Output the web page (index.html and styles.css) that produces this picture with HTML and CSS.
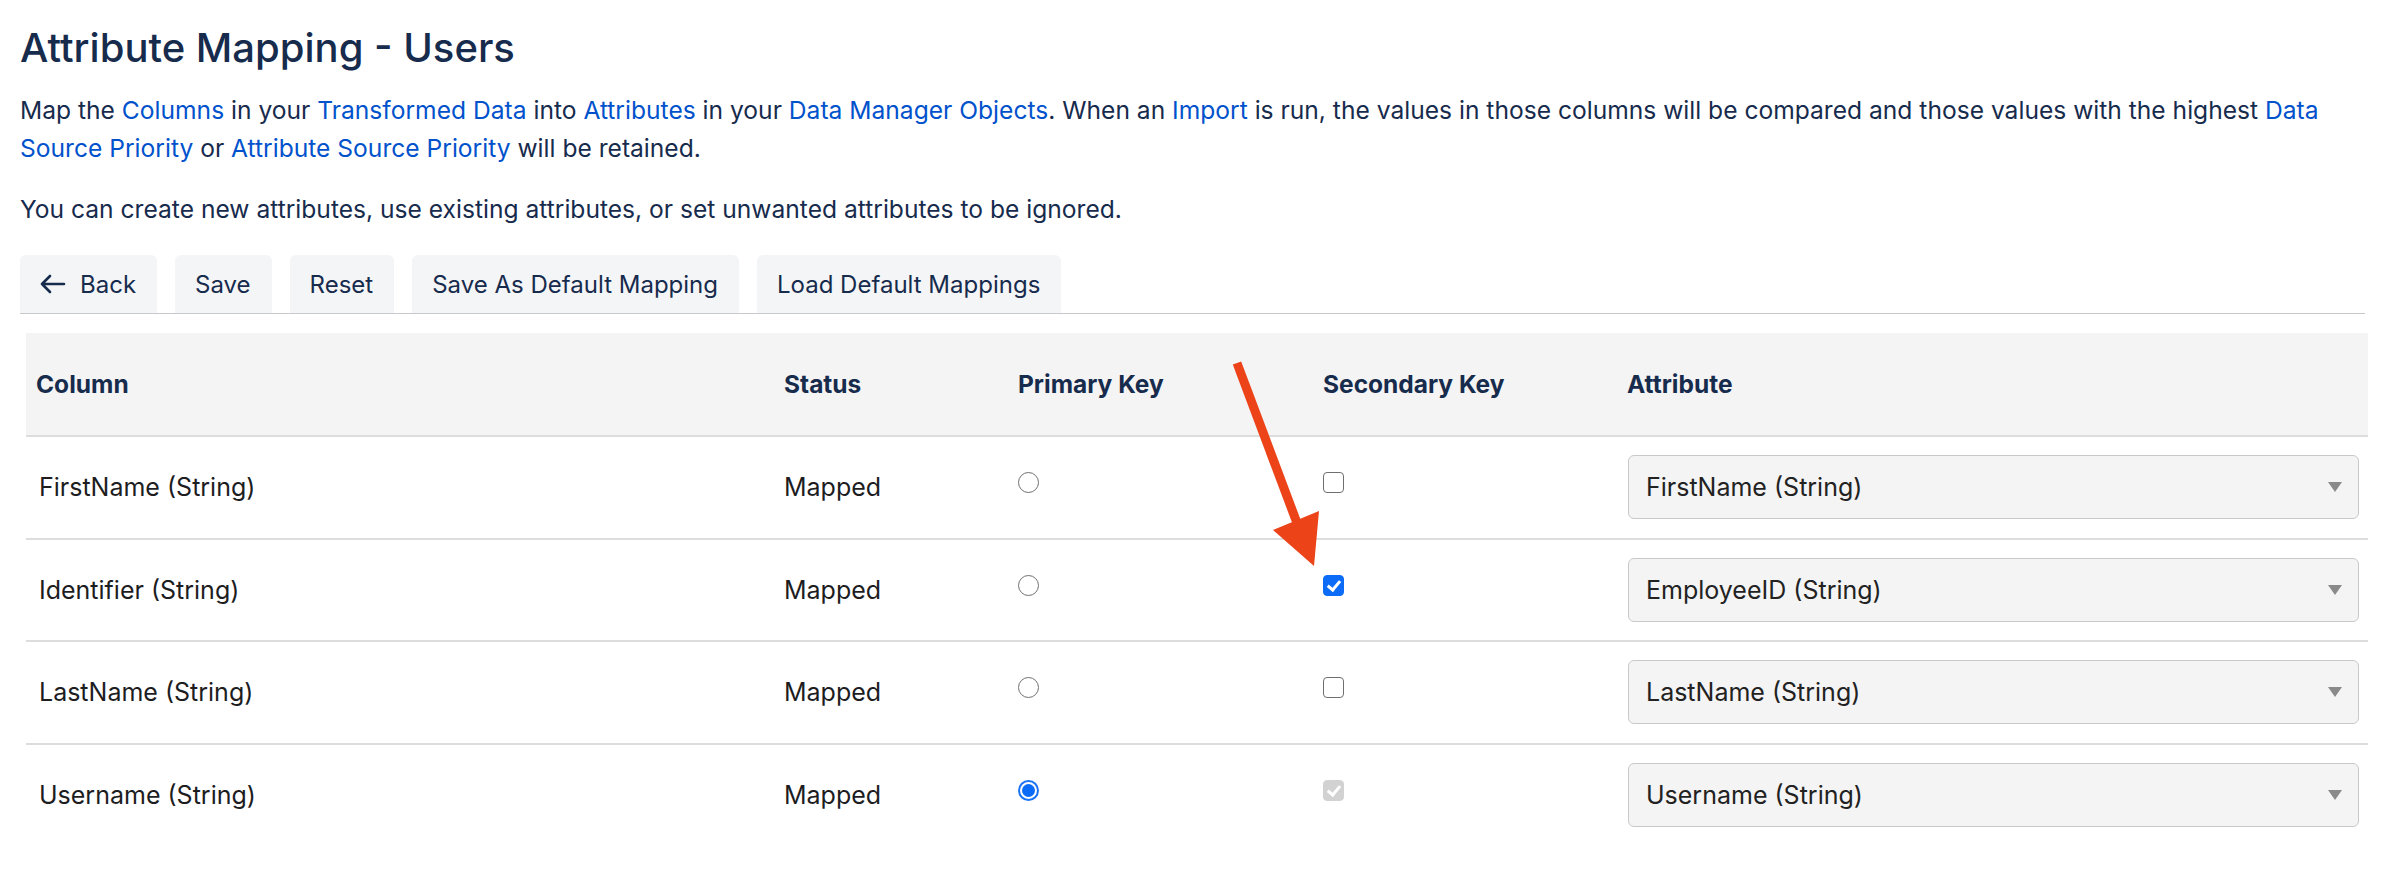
FILE: index.html
```html
<!DOCTYPE html>
<html>
  <head>
    <meta charset="utf-8" />
    <title>Attribute Mapping - Users</title>
    <link rel="stylesheet" href="styles.css">
  </head>
  <body>
    <div class="page">
      <h1 class="page-title">Attribute Mapping - Users</h1>
      <p class="intro">Map the <a href="#">Columns</a> in your <a href="#">Transformed Data</a> into <a href="#">Attributes</a> in your <a href="#">Data Manager Objects</a>. When an <a href="#">Import</a> is run, the values in those columns will be compared and those values with the highest <a href="#">Data</a> <a href="#">Source Priority</a> or <a href="#">Attribute Source Priority</a> will be retained.</p>
      <p class="intro intro-last">You can create new attributes, use existing attributes, or set unwanted attributes to be ignored.</p>

      <!-- Toolbar -->
      <div class="toolbar">
        <button class="tool-btn">
          <svg class="back-icon" width="26" height="20" viewBox="0 0 26 20" fill="none" stroke="#172b4d" stroke-width="2.6" stroke-linecap="round" stroke-linejoin="round">
            <path d="M24 10H2M10 2L2 10l8 8" />
          </svg>
          Back
        </button>
        <button class="tool-btn">Save</button>
        <button class="tool-btn">Reset</button>
        <button class="tool-btn">Save As Default Mapping</button>
        <button class="tool-btn">Load Default Mappings</button>
      </div>

      <!-- Mapping table -->
      <table class="mapping">
        <colgroup>
          <col class="col-column" />
          <col class="col-status" />
          <col class="col-primary" />
          <col class="col-secondary" />
          <col class="col-attribute" />
        </colgroup>
        <thead>
          <tr>
            <th>Column</th>
            <th>Status</th>
            <th>Primary Key</th>
            <th>Secondary Key</th>
            <th>Attribute</th>
          </tr>
        </thead>
        <tbody>
          <tr>
            <td class="name">FirstName (String)</td>
            <td>Mapped</td>
            <td><input type="radio" name="pk" /></td>
            <td><input type="checkbox" /></td>
            <td>
              <div class="select">FirstName (String)<span class="caret"></span></div>
            </td>
          </tr>
          <tr>
            <td class="name">Identifier (String)</td>
            <td>Mapped</td>
            <td><input type="radio" name="pk" /></td>
            <td><input type="checkbox" checked /></td>
            <td>
              <div class="select">EmployeeID (String)<span class="caret"></span></div>
            </td>
          </tr>
          <tr>
            <td class="name">LastName (String)</td>
            <td>Mapped</td>
            <td><input type="radio" name="pk" /></td>
            <td><input type="checkbox" /></td>
            <td>
              <div class="select">LastName (String)<span class="caret"></span></div>
            </td>
          </tr>
          <tr>
            <td class="name">Username (String)</td>
            <td>Mapped</td>
            <td><input type="radio" name="pk" checked /></td>
            <td><input type="checkbox" checked disabled /></td>
            <td>
              <div class="select">Username (String)<span class="caret"></span></div>
            </td>
          </tr>
        </tbody>
      </table>

      <!-- Annotation arrow -->
      <svg class="annotation" width="110" height="230" viewBox="1220 350 110 230">
        <line x1="1237" y1="363" x2="1297" y2="523" stroke="#ec4319" stroke-width="9" />
        <polygon points="1273,530 1319,511 1314,566" fill="#ec4319" />
      </svg>
    </div>
  </body>
</html>
```

FILE: styles.css
```css
body,
html {
  margin: 0;
  padding: 0;
  background: #ffffff;
}

body {
  font-family: Inter, "Noto Sans", "Liberation Sans", sans-serif;
  color: #172b4d;
}

.page {
  position: relative;
  padding: 25px 25px 0 20px;
}

.page-title {
  margin: 0 0 20px;
  font-size: 40px;
  line-height: 46px;
  font-weight: 500;
  color: #172b4d;
}

.intro {
  margin: 0 0 23px;
  font-size: 24.6px;
  line-height: 38px;
}

.intro-last {
  margin-bottom: 27px;
}

.intro a {
  color: #0052cc;
  text-decoration: none;
}

/* Toolbar */
.toolbar {
  display: flex;
  gap: 18px;
  border-bottom: 1px solid #c8c9cc;
}

.tool-btn {
  display: flex;
  align-items: center;
  gap: 14px;
  height: 58px;
  padding: 0 21px 0 20px;
  border: none;
  border-radius: 6px 6px 0 0;
  background: #f4f5f7;
  color: #172b4d;
  font-family: inherit;
  font-size: 24px;
  cursor: pointer;
}

/* Table */
.mapping {
  margin: 19px 0 0 6px;
  width: calc(100% - 3px);
  border-collapse: collapse;
  table-layout: fixed;
  font-size: 25px;
}

.col-column {
  width: 748px;
}

.col-status {
  width: 234px;
}

.col-primary {
  width: 305px;
}

.col-secondary {
  width: 304px;
}

.mapping th {
  height: 102px;
  padding: 0 10px;
  background: #f4f4f4;
  text-align: left;
  font-size: 24.5px;
  font-weight: 700;
  color: #172b4d;
  border-bottom: 2px solid #dddddd;
}

.mapping td {
  height: 100.5px;
  padding: 0 10px;
  color: #1d1d1f;
  border-bottom: 2px solid #dddddd;
}

.mapping tbody tr:last-child td {
  border-bottom: none;
}

.mapping td.name {
  padding-left: 13px;
}

/* Radios and checkboxes */
.mapping input {
  appearance: none;
  -webkit-appearance: none;
  position: relative;
  display: block;
  margin: -9px 0 0;
  width: 21px;
  height: 21px;
  background: #ffffff;
}

.mapping input[type="radio"] {
  border: 1.5px solid #6f6f6f;
  border-radius: 50%;
}

.mapping input[type="radio"]:checked {
  border: 2px solid #1a73f5;
}

.mapping input[type="radio"]:checked::before {
  content: "";
  position: absolute;
  inset: 2px;
  border-radius: 50%;
  background: #0d6cf7;
}

.mapping input[type="checkbox"] {
  border: 1.5px solid #6f6f6f;
  border-radius: 4px;
}

.mapping input[type="checkbox"]:checked {
  border-color: #0d6cf7;
  background: #0d6cf7;
}

.mapping input[type="checkbox"]:disabled {
  border-color: #d2d2d2;
  background: #d2d2d2;
}

.mapping input[type="checkbox"]:checked::before {
  content: "";
  position: absolute;
  left: 6px;
  top: 2px;
  width: 5px;
  height: 10px;
  border: solid #ffffff;
  border-width: 0 3px 3px 0;
  transform: rotate(40deg);
}

/* Select */
.select {
  display: flex;
  align-items: center;
  justify-content: space-between;
  height: 62px;
  margin-left: 1px;
  margin-right: -1px;
  padding: 0 16px 0 17px;
  background: #f4f4f4;
  border: 1px solid #c9c9c9;
  border-radius: 6px;
  color: #222222;
}

.caret {
  width: 0;
  height: 0;
  border-left: 7px solid transparent;
  border-right: 7px solid transparent;
  border-top: 10px solid #8a8a8a;
}

/* Annotation */
.annotation {
  position: absolute;
  left: 1220px;
  top: 350px;
  pointer-events: none;
}
```
